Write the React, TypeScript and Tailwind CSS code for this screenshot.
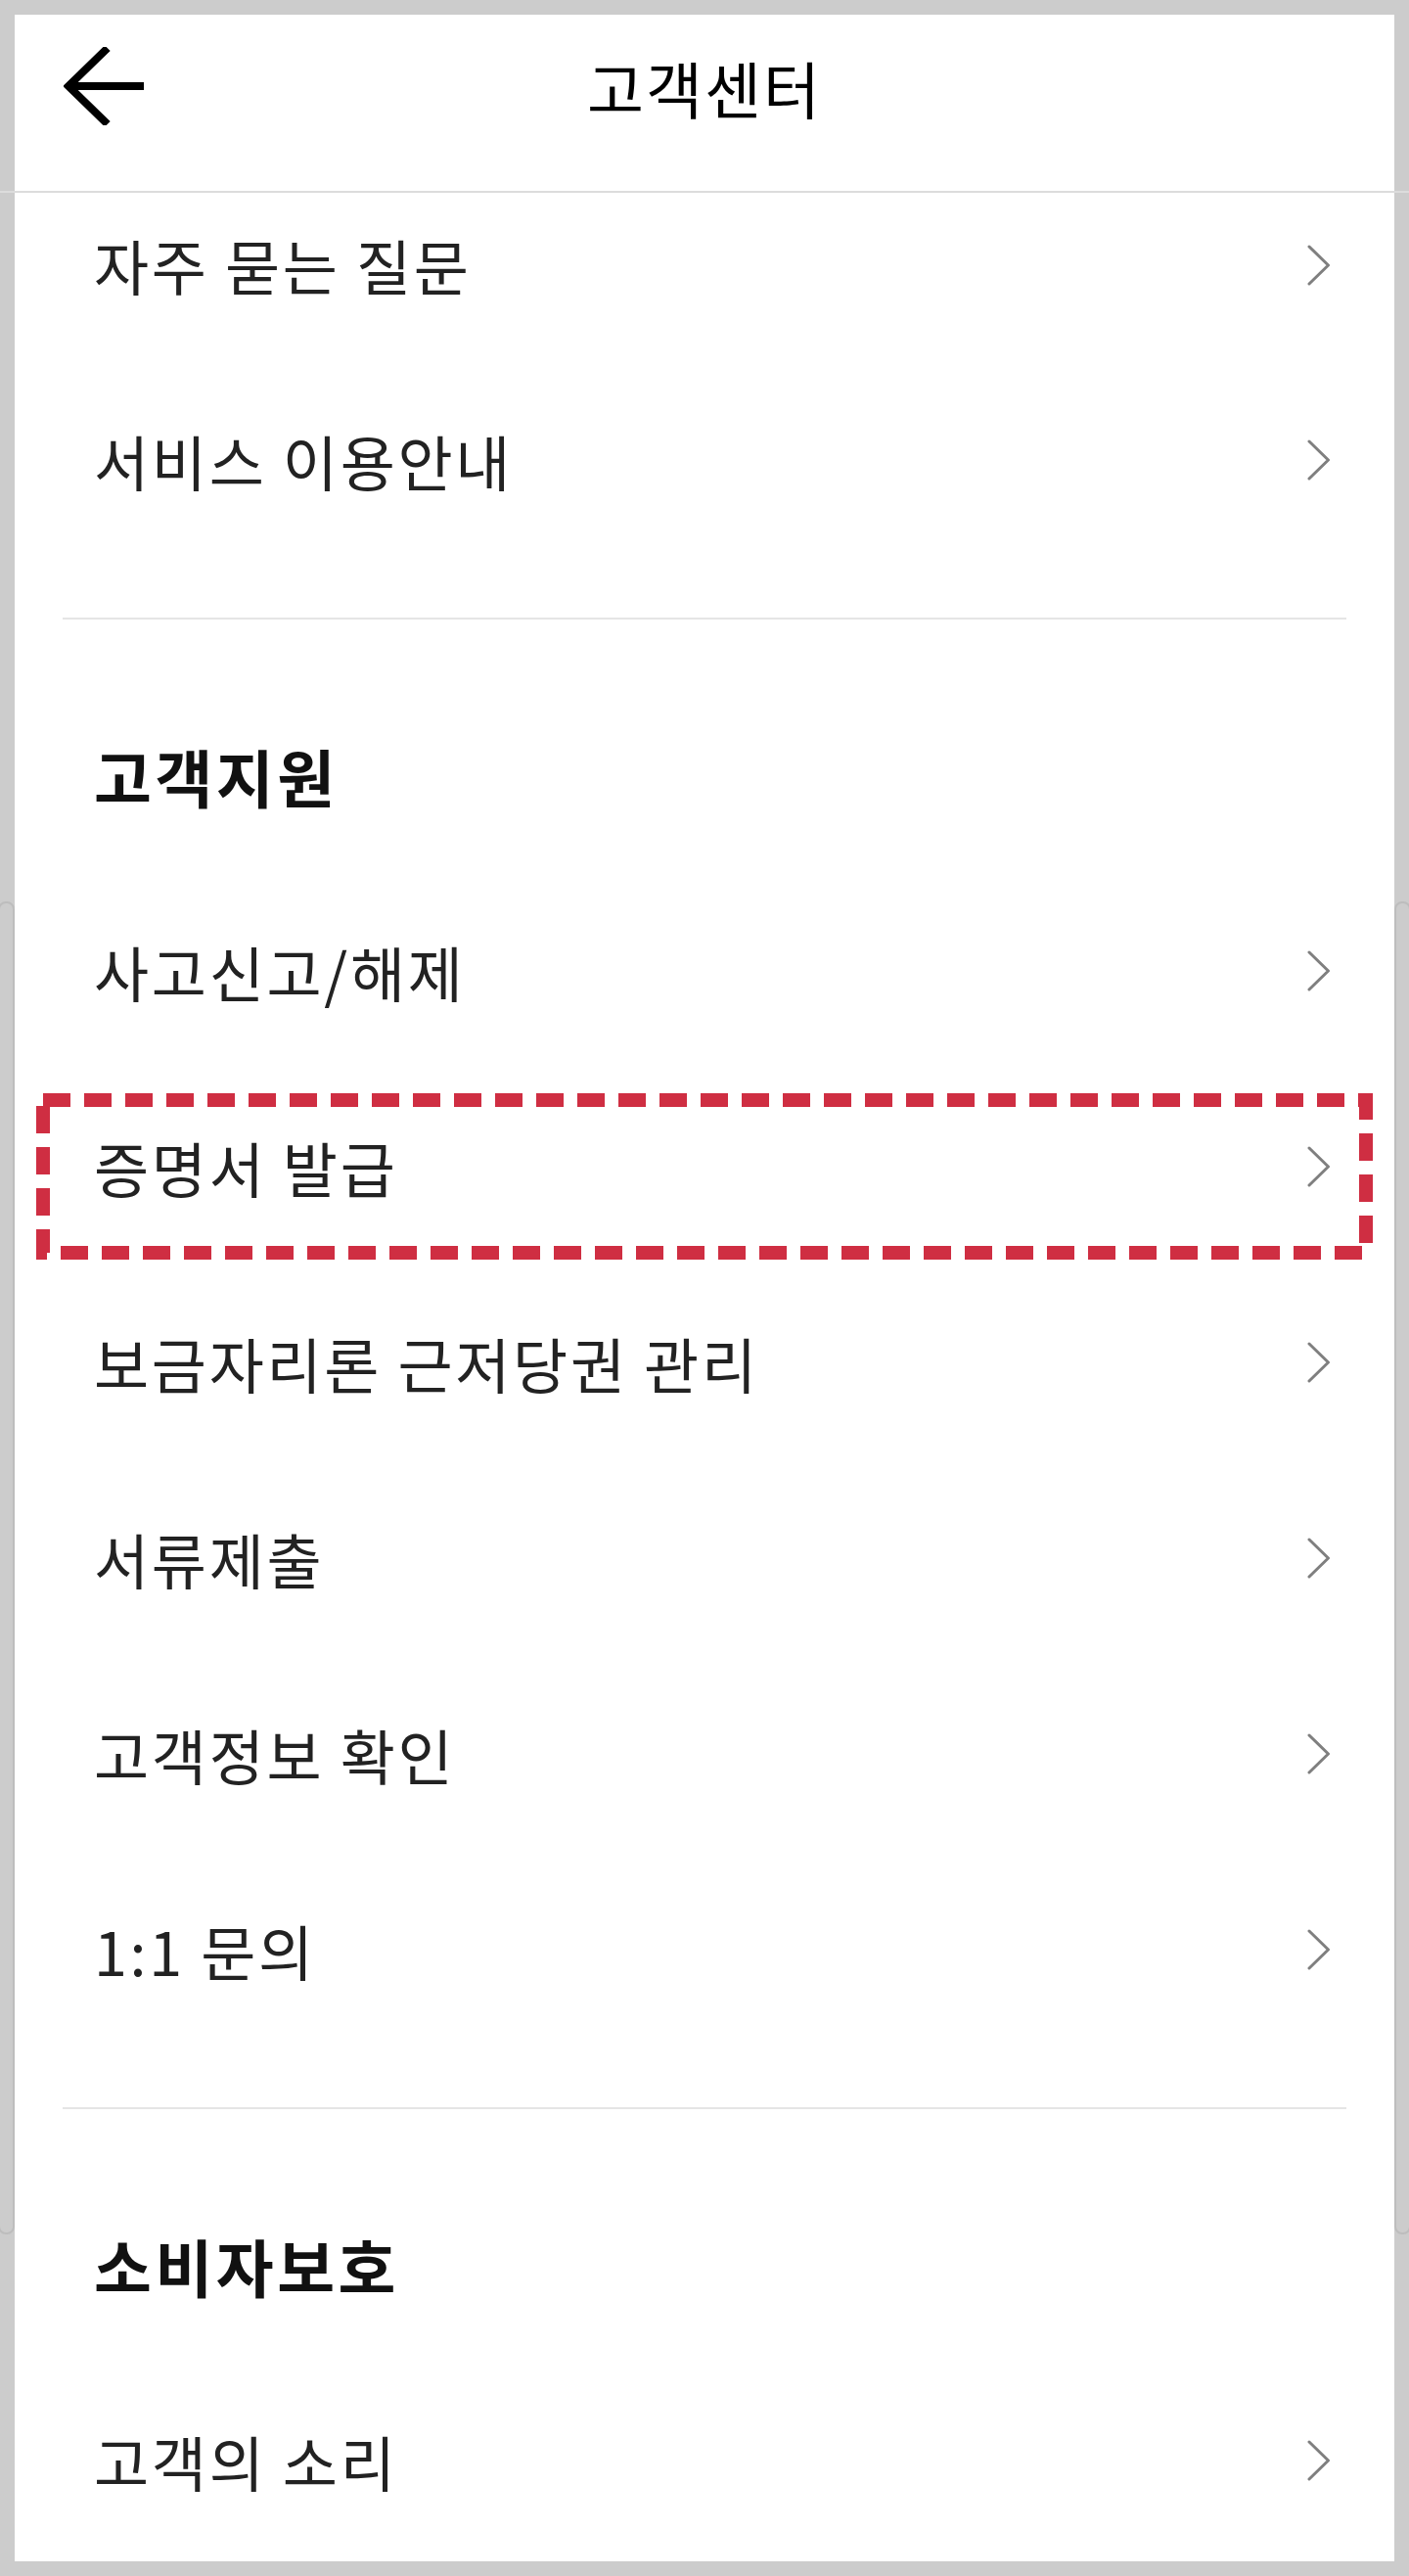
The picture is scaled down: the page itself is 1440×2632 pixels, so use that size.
import type { ReactNode } from 'react'

const FONT = "font-['Noto_Sans_CJK_KR','Noto_Sans',sans-serif]"

const SUPPORT_ITEMS = [
  '사고신고/해제',
  '증명서 발급',
  '보금자리론 근저당권 관리',
  '서류제출',
  '고객정보 확인',
  '1:1 문의',
]

function Chevron() {
  return (
    <svg width="24" height="42" viewBox="0 0 24 42" fill="none" className="shrink-0">
      <polyline
        points="2,2 21.5,21 2,40"
        stroke="#7f7f7f"
        strokeWidth="3"
        strokeLinecap="round"
        strokeLinejoin="round"
      />
    </svg>
  )
}

function BackArrow() {
  return (
    <svg width="86" height="80" viewBox="0 0 86 80" fill="none">
      <path d="M42 4 L5 40 L42 76" stroke="#000" strokeWidth="8" strokeLinecap="square" />
      <path d="M7 40 H82" stroke="#000" strokeWidth="8" />
    </svg>
  )
}

function MenuRow({
  label,
  className = 'h-[200px]',
  children,
}: {
  label: string
  className?: string
  children?: ReactNode
}) {
  return (
    <div className={`relative flex items-center justify-between pl-[81px] pr-[65px] ${className}`}>
      <span className="text-[61px] leading-none tracking-[2.7px] text-[#222]">{label}</span>
      <Chevron />
      {children}
    </div>
  )
}

function SectionTitle({ title }: { title: string }) {
  return (
    <div className="flex h-[200px] items-center pl-[81px]">
      <h2 className="text-[64px] font-bold leading-none tracking-[3.5px] text-[#111]">{title}</h2>
    </div>
  )
}

function Divider() {
  return <div className="mx-[49px] mt-[61px] mb-[59px] h-[2px] bg-[#e5e5e5]" />
}

// dashed highlight drawn over the row
function Highlight() {
  return (
    <svg
      className="pointer-events-none absolute left-[22px] top-[25px]"
      width="1366"
      height="170"
      viewBox="0 0 1366 170"
      fill="none"
    >
      <rect
        x="7"
        y="7"
        width="1352"
        height="156"
        stroke="#cf2e42"
        strokeWidth="14"
        strokeDasharray="28 14"
      />
    </svg>
  )
}

export default function App() {
  return (
    <div className={`relative min-h-screen bg-[#cccccc] p-[15px] ${FONT}`}>
      {/* phone side buttons peeking out of the frame */}
      <div className="absolute left-[-2px] top-[921px] h-[1362px] w-[17px] rounded-[8px] border-2 border-[#bdbdbd]" />
      <div className="absolute left-[1425px] top-[921px] h-[1362px] w-[17px] rounded-[8px] border-2 border-[#bdbdbd]" />

      <div className="relative bg-white pb-[3px]">
        <header className="relative flex h-[180px] items-center justify-center pb-[34px]">
          <button className="absolute left-[50px] top-[33px]">
            <BackArrow />
          </button>
          <h1 className="text-[63px] leading-none tracking-[2px] text-black">고객센터</h1>
        </header>
        <div className="-mx-[15px] h-[2px] bg-[#dcdcdc]" />

        <MenuRow label="자주 묻는 질문" className="h-[173px] pb-[26px]" />
        <MenuRow label="서비스 이용안내" />

        <Divider />

        <SectionTitle title="고객지원" />
        {SUPPORT_ITEMS.map((item) => (
          <MenuRow key={item} label={item}>
            {item === '증명서 발급' && <Highlight />}
          </MenuRow>
        ))}

        <Divider />

        <SectionTitle title="소비자보호" />
        <MenuRow label="고객의 소리" />
      </div>
    </div>
  )
}
